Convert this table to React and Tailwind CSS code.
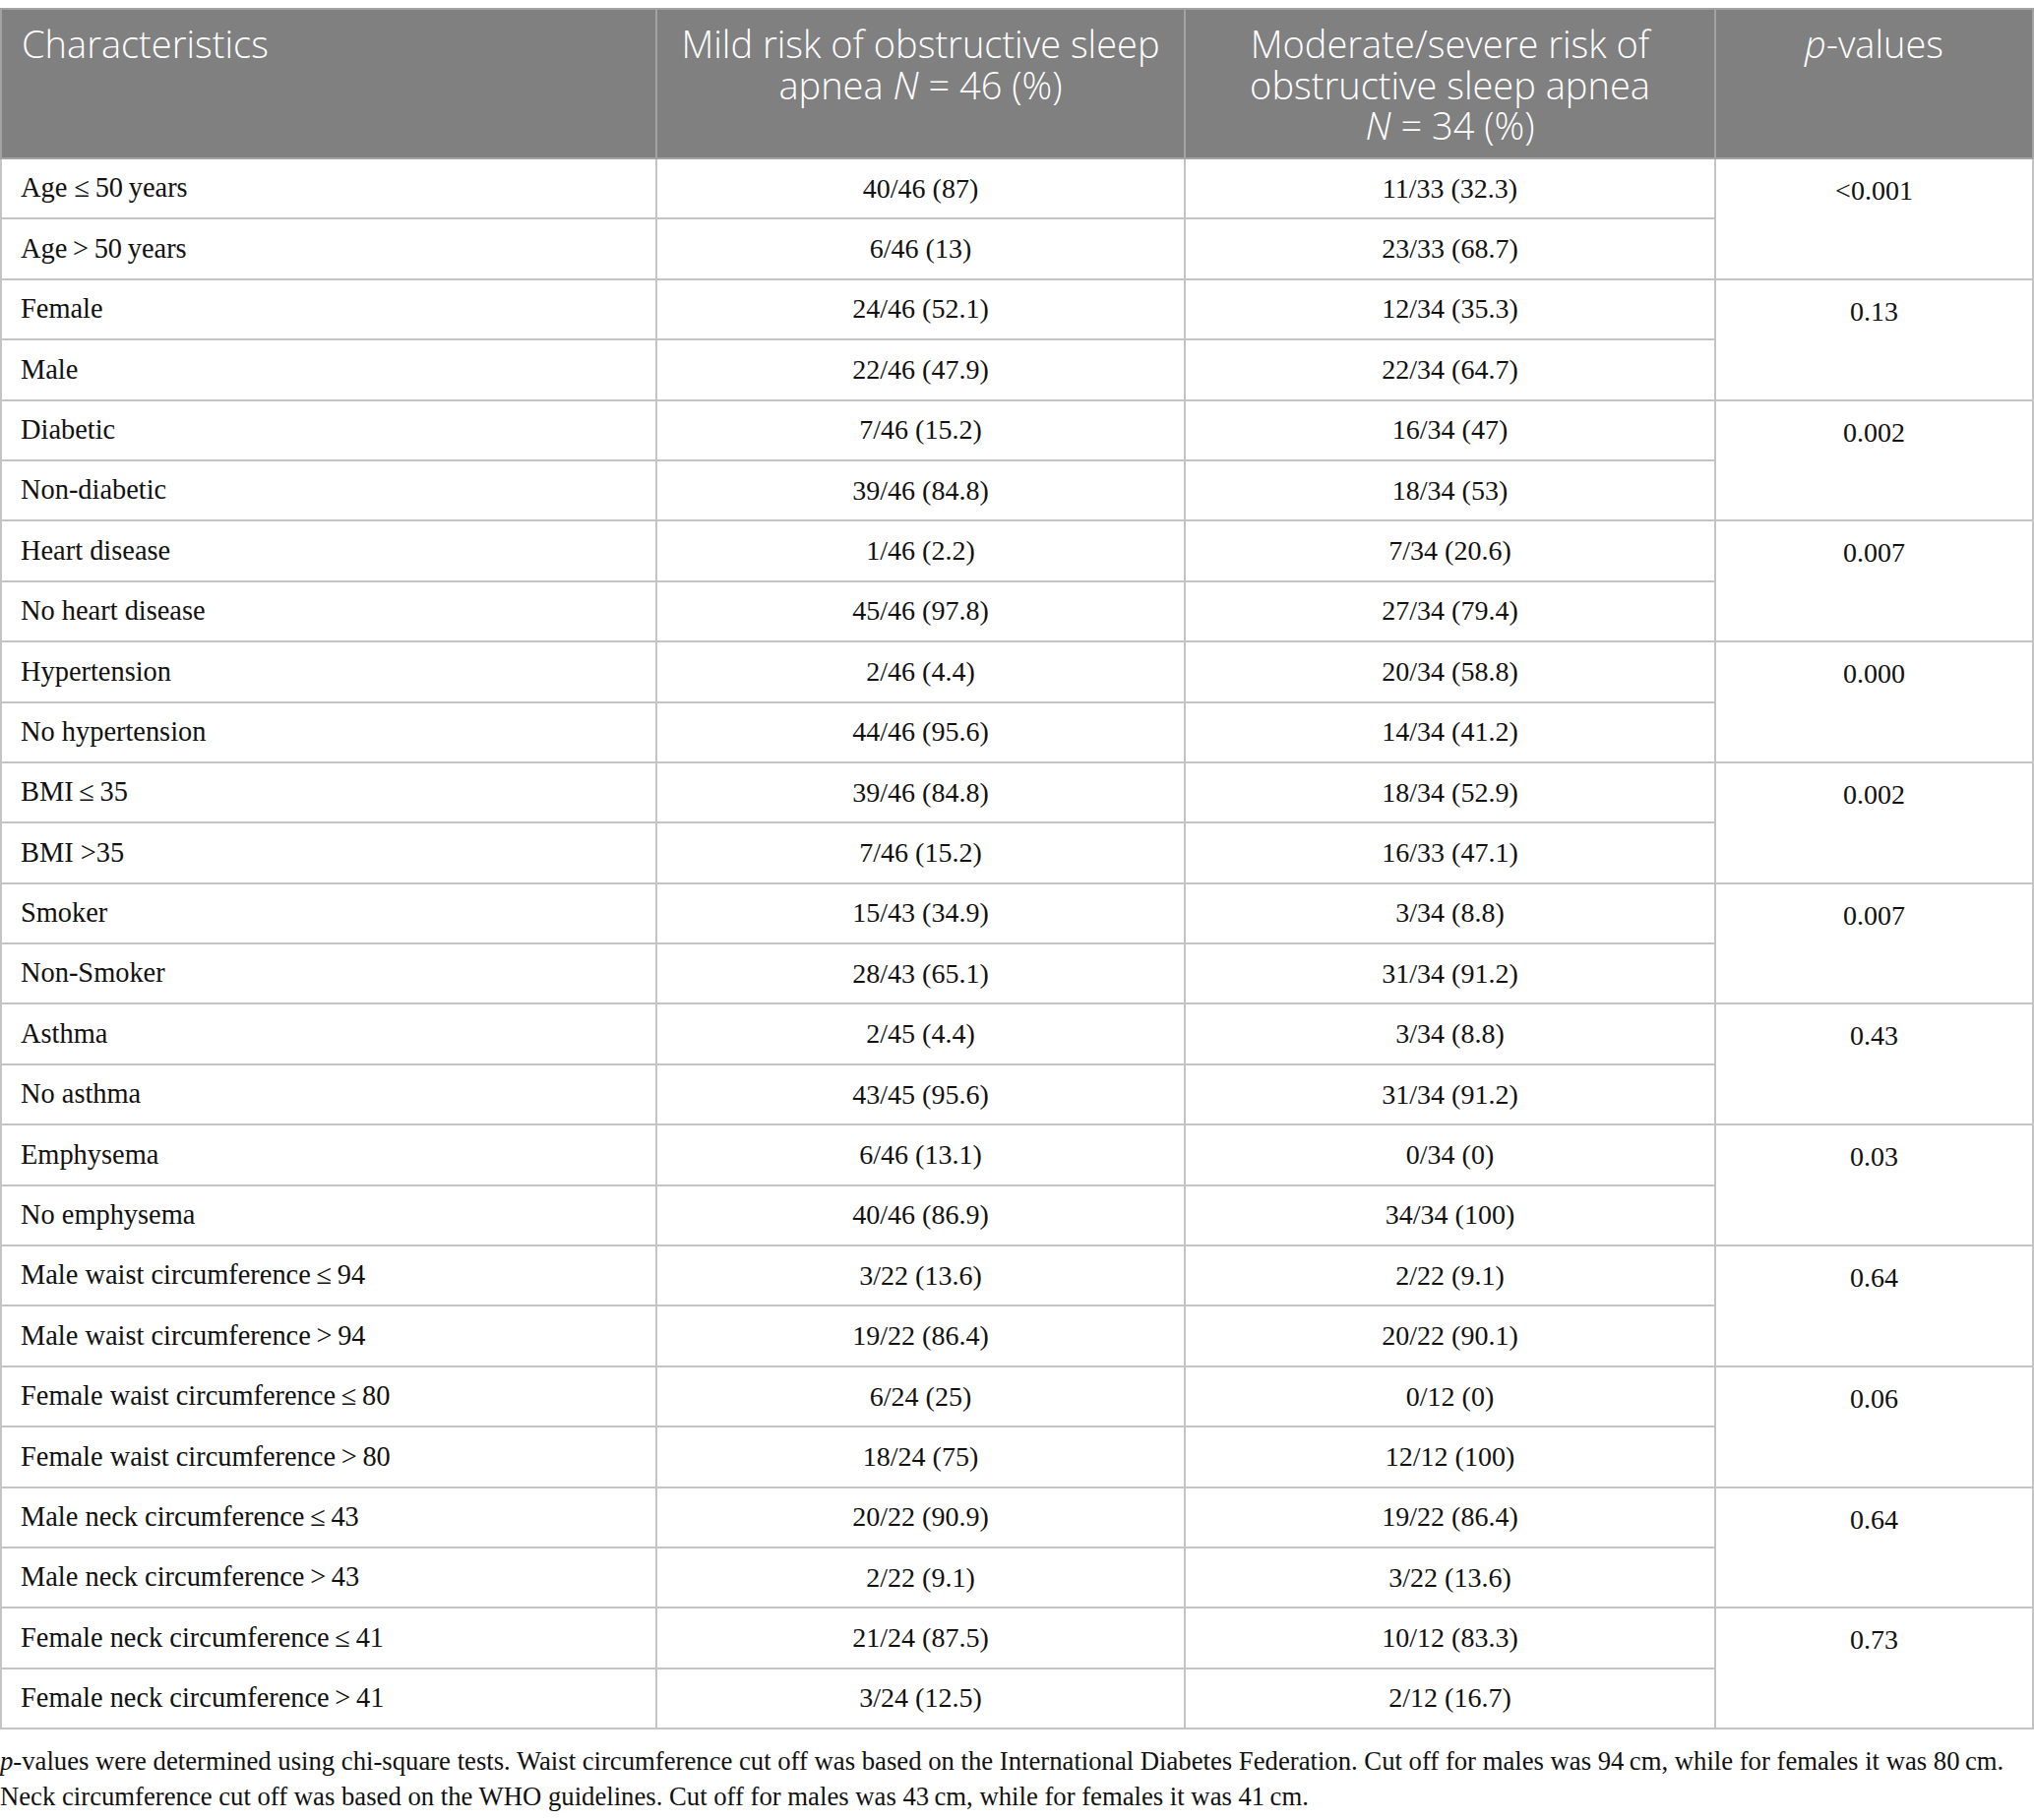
import React from 'react'

const rows = [
  ['Age \u2264\u200950\u2009years', '40/46 (87)', '11/33 (32.3)', '<0.001'],
  ['Age\u2009>\u200950\u2009years', '6/46 (13)', '23/33 (68.7)'],
  ['Female', '24/46 (52.1)', '12/34 (35.3)', '0.13'],
  ['Male', '22/46 (47.9)', '22/34 (64.7)'],
  ['Diabetic', '7/46 (15.2)', '16/34 (47)', '0.002'],
  ['Non-diabetic', '39/46 (84.8)', '18/34 (53)'],
  ['Heart disease', '1/46 (2.2)', '7/34 (20.6)', '0.007'],
  ['No heart disease', '45/46 (97.8)', '27/34 (79.4)'],
  ['Hypertension', '2/46 (4.4)', '20/34 (58.8)', '0.000'],
  ['No hypertension', '44/46 (95.6)', '14/34 (41.2)'],
  ['BMI\u2009\u2264\u200935', '39/46 (84.8)', '18/34 (52.9)', '0.002'],
  ['BMI >35', '7/46 (15.2)', '16/33 (47.1)'],
  ['Smoker', '15/43 (34.9)', '3/34 (8.8)', '0.007'],
  ['Non-Smoker', '28/43 (65.1)', '31/34 (91.2)'],
  ['Asthma', '2/45 (4.4)', '3/34 (8.8)', '0.43'],
  ['No asthma', '43/45 (95.6)', '31/34 (91.2)'],
  ['Emphysema', '6/46 (13.1)', '0/34 (0)', '0.03'],
  ['No emphysema', '40/46 (86.9)', '34/34 (100)'],
  ['Male waist circumference\u2009\u2264\u200994', '3/22 (13.6)', '2/22 (9.1)', '0.64'],
  ['Male waist circumference\u2009>\u200994', '19/22 (86.4)', '20/22 (90.1)'],
  ['Female waist circumference\u2009\u2264\u200980', '6/24 (25)', '0/12 (0)', '0.06'],
  ['Female waist circumference\u2009>\u200980', '18/24 (75)', '12/12 (100)'],
  ['Male neck circumference\u2009\u2264\u200943', '20/22 (90.9)', '19/22 (86.4)', '0.64'],
  ['Male neck circumference\u2009>\u200943', '2/22 (9.1)', '3/22 (13.6)'],
  ['Female neck circumference\u2009\u2264\u200941', '21/24 (87.5)', '10/12 (83.3)', '0.73'],
  ['Female neck circumference\u2009>\u200941', '3/24 (12.5)', '2/12 (16.7)'],
]

const serif = { fontFamily: '"Liberation Serif", "Times New Roman", serif' }

export default function App() {
  return (
    <div className="bg-white w-[2067px] pt-[8px]">
      <table className="w-full border-collapse table-fixed border-2 border-[#c4c4c4]">
        <colgroup>
          <col className="w-[666px]" />
          <col className="w-[537px]" />
          <col className="w-[539px]" />
          <col />
        </colgroup>
        <thead>
          <tr className="bg-[#808080] text-white font-['Open_Sans',sans-serif] text-[38px] font-light leading-[41.5px]">
            <th className="h-[152px] align-top text-left font-light px-[20px] pt-[14px] border-2 border-[#a3a3a3]">
              Characteristics
            </th>
            <th className="align-top text-center font-light px-[10px] pt-[14px] border-2 border-[#a3a3a3] whitespace-nowrap">
              Mild risk of obstructive sleep
              <br />
              apnea <i>N</i> = 46 (%)
            </th>
            <th className="align-top text-center font-light px-[10px] pt-[14px] border-2 border-[#a3a3a3] whitespace-nowrap">
              Moderate/severe risk of
              <br />
              obstructive sleep apnea
              <br />
              <i>N</i> = 34 (%)
            </th>
            <th className="align-top text-center font-light px-[16px] pt-[14px] border-2 border-[#a3a3a3]">
              <i>p</i>-values
            </th>
          </tr>
        </thead>
        <tbody style={serif} className="text-[28px] text-[#111]">
          {rows.map((r, i) => (
            <tr key={i}>
              <td className="h-[61.4px] px-[19px] text-[28.4px] border-2 border-[#c4c4c4] align-middle">{r[0]}</td>
              <td className="text-center border-2 border-[#c4c4c4] align-middle">{r[1]}</td>
              <td className="text-center border-2 border-[#c4c4c4] align-middle">{r[2]}</td>
              {i % 2 === 0 && (
                <td rowSpan={2} className="text-center align-top pt-[11px] border-2 border-[#c4c4c4]">
                  {r[3]}
                </td>
              )}
            </tr>
          ))}
        </tbody>
      </table>
      <div style={serif} className="text-[26.7px] leading-[36px] text-[#111] pt-[14px]">
        <i>p</i>-values were determined using chi-square tests. Waist circumference cut off was based on the International Diabetes Federation. Cut off for males was 94{'\u2009'}cm, while for females it was 80{'\u2009'}cm.
        <br />
        Neck circumference cut off was based on the WHO guidelines. Cut off for males was 43{'\u2009'}cm, while for females it was 41{'\u2009'}cm.
      </div>
    </div>
  )
}
